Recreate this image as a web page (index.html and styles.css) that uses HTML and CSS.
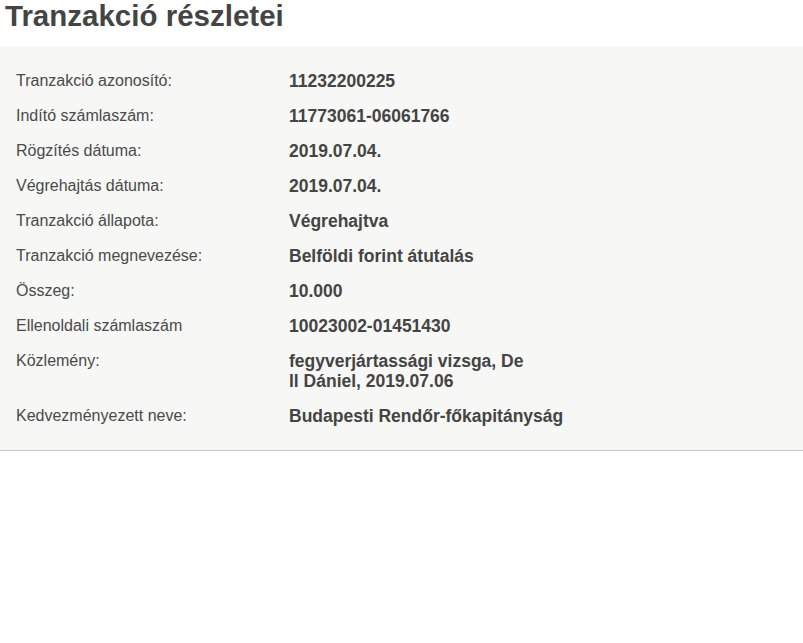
FILE: index.html
```html
<!DOCTYPE html>
<html lang="hu">
<head>
<meta charset="utf-8">
<title>Tranzakció részletei</title>
<link rel="stylesheet" href="styles.css">
</head>
<body>
<h1 class="title">Tranzakció részletei</h1>
<div class="details">
  <div class="row"><div class="label">Tranzakció azonosító:</div><div class="value">11232200225</div></div>
  <div class="row"><div class="label">Indító számlaszám:</div><div class="value">11773061-06061766</div></div>
  <div class="row"><div class="label">Rögzítés dátuma:</div><div class="value">2019.07.04.</div></div>
  <div class="row"><div class="label">Végrehajtás dátuma:</div><div class="value">2019.07.04.</div></div>
  <div class="row"><div class="label">Tranzakció állapota:</div><div class="value">Végrehajtva</div></div>
  <div class="row"><div class="label">Tranzakció megnevezése:</div><div class="value">Belföldi forint átutalás</div></div>
  <div class="row"><div class="label">Összeg:</div><div class="value">10.000</div></div>
  <div class="row"><div class="label">Ellenoldali számlaszám</div><div class="value">10023002-01451430</div></div>
  <div class="row"><div class="label">Közlemény:</div><div class="value">fegyverjártassági vizsga, De<br>ll Dániel, 2019.07.06</div></div>
  <div class="row"><div class="label">Kedvezményezett neve:</div><div class="value">Budapesti Rendőr-főkapitányság</div></div>
</div>
</body>
</html>
```
FILE: styles.css
```css
html, body {
  margin: 0;
  padding: 0;
  background: #fff;
}
body {
  font-family: "Liberation Sans", Arial, sans-serif;
  color: #444;
}
.title {
  margin: 0 0 14px 0;
  padding-left: 5px;
  font-size: 29.5px;
  line-height: 32px;
  font-weight: bold;
  color: #444;
}
.details {
  background: #f7f7f5;
  border-bottom: 1px solid #c8c8c8;
  padding: 25px 16px 24px 16px;
  display: flex;
  flex-direction: column;
  gap: 15px;
}
.row {
  display: flex;
  line-height: 20px;
}
.label {
  width: 273px;
  flex: none;
  font-size: 16px;
  color: #4a4a4a;
}
.value {
  font-size: 17.5px;
  font-weight: bold;
  color: #444;
}
```
